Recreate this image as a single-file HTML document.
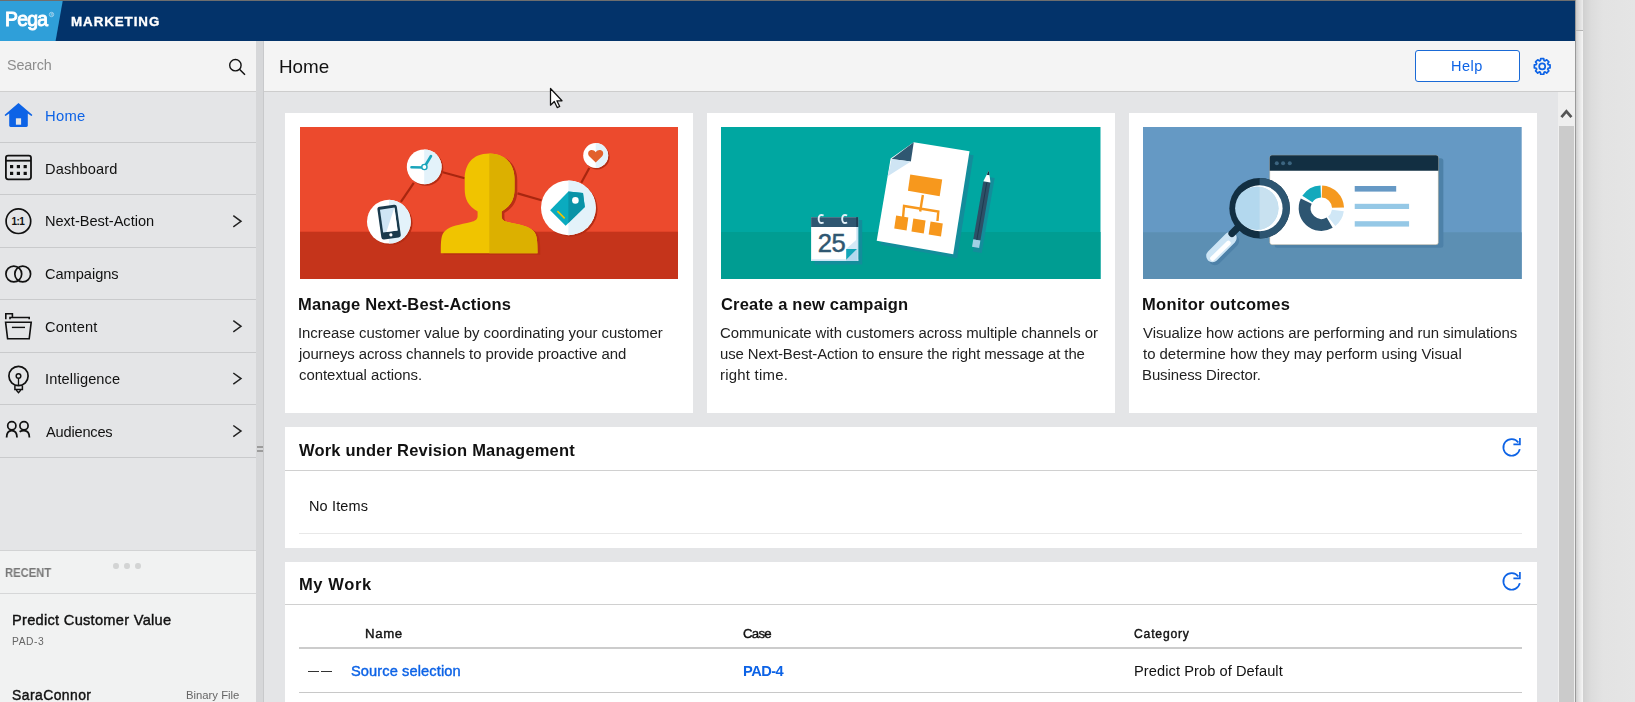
<!DOCTYPE html>
<html><head><meta charset="utf-8">
<style>
*{box-sizing:border-box;margin:0;padding:0}
html,body{width:1635px;height:702px;overflow:hidden;background:#e4e4e4;font-family:"Liberation Sans",sans-serif;color:#000}
.a{position:absolute}
.t{position:absolute;line-height:1;white-space:nowrap;will-change:transform}
#topline{left:0;top:0;width:1575px;height:1px;background:#6e6e6e}
#hdr{left:0;top:1px;width:1575px;height:40px;background:#03336a}
#logo{left:0;top:1px;width:64px;height:40px;background:#2f9fd9;clip-path:polygon(0 0,62.7px 0,55.6px 40px,0 40px)}
#side{left:0;top:41px;width:256px;height:661px;background:#e4e5e7}
#search{left:0;top:41px;width:256px;height:51px;background:#f3f3f3;border-bottom:1px solid #cfcfcf}
#split{left:256px;top:41px;width:8px;height:661px;background:#d6d7d9;border-right:1px solid #c8c9cb}
#mhdr{left:264px;top:41px;width:1311px;height:51px;background:#f4f4f4;border-bottom:1px solid #cdcdcd}
#content{left:264px;top:92px;width:1294px;height:610px;background:#e4e5e7}
#rstrip{left:1575px;top:0;width:8px;height:702px;border-left:1px solid #9a9a9a;background:linear-gradient(180deg,transparent 30px,#b5b5b5 30px,#b5b5b5 31px,transparent 31px),linear-gradient(90deg,#cfcfcf,#e2e2e2 40%,#f3f3f3 90%,#f6f6f6) 0 31px/100% 100% no-repeat,linear-gradient(90deg,#c9c9c9,#d9d9d9 40%,#eaeaea 90%,#ededed)}
#rbg{left:1583px;top:0;width:52px;height:702px;background:linear-gradient(90deg,#d0d0d0,#dcdcdc 8px,#e3e3e3 20px,#e5e5e5)}
.nav{position:absolute;left:0;width:256px;height:1px;background:#c9cacc}
.card{position:absolute;background:#fff;width:408px;height:300px;top:113px}
.card .img{position:absolute;left:15px;top:14px;overflow:hidden}
.panel{position:absolute;background:#fff;left:285px;width:1252px}
</style></head><body>
<div id="topline" class="a"></div>
<div id="hdr" class="a"></div>
<div id="logo" class="a"></div>
<svg class="a" style="left:48px;top:10px" width="8" height="8"><circle cx="3.5" cy="4.5" r="2.2" fill="none" stroke="#d8ecf8" stroke-width="0.6"/><text x="2.4" y="5.8" font-size="3.2" font-family="Liberation Sans" fill="#d8ecf8">R</text></svg>
<div id="side" class="a"></div>
<div id="search" class="a"></div>
<svg class="a" style="left:226px;top:56px" width="22" height="22" viewBox="0 0 22 22"><circle cx="9.4" cy="9.2" r="5.7" fill="none" stroke="#111" stroke-width="1.4"/><line x1="13.5" y1="13.3" x2="19" y2="18.8" stroke="#111" stroke-width="1.5"/></svg>
<div class="nav" style="top:142px"></div><div class="nav" style="top:194px"></div><div class="nav" style="top:247px"></div><div class="nav" style="top:299px"></div><div class="nav" style="top:352px"></div><div class="nav" style="top:404px"></div><div class="nav" style="top:457px"></div>
<svg class="a" style="left:0;top:92px" width="40" height="370" viewBox="0 92 40 370">
<path d="M18.5 103L4.8 114.8C4.6 115.2 5 116 5.6 116L9.2 113.6V125.6C9.2 126.4 9.8 127 10.6 127H26.4C27.2 127 27.8 126.4 27.8 125.6V113.6L31.4 116C32 116 32.4 115.2 32.2 114.8Z" fill="#0d63e6"/>
<rect x="15.9" y="118.3" width="5.2" height="6.4" fill="#e4e5e7"/>
<g fill="none" stroke="#111" stroke-width="1.8">
<rect x="5.9" y="155.6" width="25.1" height="23.7" rx="2.2"/><line x1="5.9" y1="160.7" x2="31" y2="160.7"/>
<circle cx="18.4" cy="221.2" r="12.3" stroke-width="1.7"/>
<circle cx="13.8" cy="274" r="7.9" stroke-width="1.7"/><circle cx="22.7" cy="274" r="7.9" stroke-width="1.7"/>
<path d="M5.8 319.3V313.8H12.4V316.7M10 319.3V317.5H29.2V319.3" stroke-width="1.6"/>
<path d="M5.6 322.2H31.2L29.2 338.8H7.6Z" stroke-width="1.6"/><line x1="11.9" y1="327.4" x2="25" y2="327.4" stroke-width="1.4"/>
<circle cx="18.5" cy="376" r="9.6" stroke-width="1.7"/><circle cx="18.5" cy="376" r="2.3" stroke-width="1.5"/><line x1="18.5" y1="378.3" x2="18.5" y2="385.6" stroke-width="1.3"/>
<path d="M14.9 385.8V389.6H22.4V385.8" stroke-width="1.5"/><path d="M16.2 390L18.5 392.6L20.8 390" stroke-width="1.4"/>
<circle cx="11.8" cy="425.7" r="4.1" stroke-width="1.7"/><circle cx="24" cy="425.7" r="4.1" stroke-width="1.7"/>
<path d="M6.6 437.6C6.6 433 8.8 430.6 11.8 430.6S17 433 17 437.6" stroke-width="1.8"/>
<path d="M19.6 431.8C20.8 430.9 22.3 430.6 24 430.6C27.1 430.6 29.4 433 29.4 437.6" stroke-width="1.8"/>
</g>
<g fill="#111"><rect x="10" y="165" width="3.2" height="3.2"/><rect x="16.8" y="165" width="3.2" height="3.2"/><rect x="23.6" y="165" width="3.2" height="3.2"/>
<rect x="10" y="171.8" width="3.2" height="3.2"/><rect x="16.8" y="171.8" width="3.2" height="3.2"/><rect x="23.6" y="171.8" width="3.2" height="3.2"/></g>
<text x="11.6" y="225.4" font-family="Liberation Sans" font-size="10" font-weight="bold" fill="#111" letter-spacing="-0.6">1:1</text>
</svg>
<svg class="a" style="left:228px;top:205px" width="20" height="240" viewBox="228 205 20 240">
<g fill="none" stroke="#222" stroke-width="1.5"><path d="M233.3 215.7L241 221.3L233.3 226.9"/><path d="M233.3 320.7L241 326.3L233.3 331.9"/><path d="M233.3 373L241 378.6L233.3 384.2"/><path d="M233.3 425.5L241 431.1L233.3 436.7"/></g>
</svg>
<div class="a" style="left:0;top:550px;width:256px;height:152px;background:#f1f2f2;border-top:1px solid #d2d3d4"></div>
<div class="a" style="left:0;top:593px;width:256px;height:1px;background:#d6d7d8"></div>
<div class="a" style="left:113px;top:562.5px;width:5.5px;height:6.5px;border-radius:50%;background:#d3d4d4"></div>
<div class="a" style="left:124px;top:562.5px;width:5.5px;height:6.5px;border-radius:50%;background:#d3d4d4"></div>
<div class="a" style="left:135px;top:562.5px;width:5.5px;height:6.5px;border-radius:50%;background:#d3d4d4"></div>
<div id="split" class="a"></div>
<div class="a" style="left:256.5px;top:445.8px;width:6px;height:2px;background:#9c9c9c"></div><div class="a" style="left:256.5px;top:449.6px;width:6px;height:2px;background:#9c9c9c"></div>
<div id="mhdr" class="a"></div>
<div class="a" style="left:1415px;top:50px;width:105px;height:32px;border:1px solid #1a6ad6;border-radius:3px;background:#fff"></div>
<svg class="a" style="left:1530px;top:54px" width="26" height="26" viewBox="1530 54 26 26"><path d="M1540.34 60.49L1540.67 58.55L1543.73 58.55L1544.06 60.49L1545.06 60.90L1546.67 59.77L1548.83 61.93L1547.70 63.54L1548.11 64.54L1550.05 64.87L1550.05 67.93L1548.11 68.26L1547.70 69.26L1548.83 70.87L1546.67 73.03L1545.06 71.90L1544.06 72.31L1543.73 74.25L1540.67 74.25L1540.34 72.31L1539.34 71.90L1537.73 73.03L1535.57 70.87L1536.70 69.26L1536.29 68.26L1534.35 67.93L1534.35 64.87L1536.29 64.54L1536.70 63.54L1535.57 61.93L1537.73 59.77L1539.34 60.90Z" fill="none" stroke="#0d63e6" stroke-width="1.7" stroke-linejoin="round"/><circle cx="1542.2" cy="66.4" r="3" fill="none" stroke="#0d63e6" stroke-width="1.7"/></svg>
<div id="content" class="a"></div>
<div class="card" style="left:285px"><svg class="img" style="left:15px;width:378px;height:152px" width="378" height="152" viewBox="0 0 378 152" preserveAspectRatio="none">
<rect width="378" height="152" fill="#ec4a2d"/><rect y="104.7" width="378" height="48" fill="#c5341b"/>
<g stroke="#a8260f" stroke-width="2.2"><line x1="100.9" y1="74.8" x2="113.8" y2="55.8"/><line x1="142.8" y1="45.3" x2="164.7" y2="51.3"/><line x1="217.5" y1="66.4" x2="241.5" y2="73.2"/><line x1="281.3" y1="55.8" x2="289.3" y2="40.9"/></g>
<defs><clipPath id="rh"><rect x="189.3" y="0" width="100" height="152"/></clipPath>
<path id="pers" d="M189.2 26.5C172 26.5 164.7 38 164.7 52V62C164.7 72 168 79 177.6 84.5V89C177.6 92.5 175 94 171 95C160 97.5 150 99 145 104C141 108 140.8 113 140.8 126.2H237.5C237.5 113 237 108 233.5 104C228.5 99 218 97.5 207.5 95C203.5 94 201.6 92.5 201.6 89V84.5C211 79 214.5 72 214.5 62V52C214.5 38 206 26.5 189.2 26.5Z"/>
<clipPath id="c1r"><rect x="124.2" y="0" width="40" height="152"/></clipPath>
<clipPath id="c2r"><rect x="88.9" y="0" width="40" height="152"/></clipPath>
<clipPath id="c3r"><rect x="268.4" y="0" width="40" height="152"/></clipPath>
<clipPath id="c4r"><rect x="295.7" y="0" width="40" height="152"/></clipPath>
</defs>
<use href="#pers" fill="#b82f15" transform="translate(2.8,1.5)"/>
<use href="#pers" fill="#f0c400"/>
<use href="#pers" fill="#dcb000" clip-path="url(#rh)"/>
<g fill="#b52d14"><circle cx="125.9" cy="41.4" r="17.4"/><circle cx="90.6" cy="96.2" r="21.9"/><circle cx="270.1" cy="82.3" r="27.4"/><circle cx="297.1" cy="29.9" r="12.5"/></g>
<g fill="#fff"><circle cx="124.2" cy="39.9" r="17.4"/><circle cx="88.9" cy="94.7" r="21.9"/><circle cx="268.4" cy="80.8" r="27.4"/><circle cx="295.7" cy="28.5" r="12.5"/></g>
<g fill="#e3f2fa"><circle cx="124.2" cy="39.9" r="17.4" clip-path="url(#c1r)"/><circle cx="88.9" cy="94.7" r="21.9" clip-path="url(#c2r)"/><circle cx="268.4" cy="80.8" r="27.4" clip-path="url(#c3r)"/><circle cx="295.7" cy="28.5" r="12.5" clip-path="url(#c4r)"/></g>
<g stroke="#1ba5bb" stroke-width="2.6" stroke-linecap="round" fill="none"><line x1="124" y1="40.5" x2="111.5" y2="40.2"/><line x1="125" y1="39" x2="131" y2="29"/></g>
<circle cx="124.4" cy="40" r="2.6" fill="#fff" stroke="#1ba5bb" stroke-width="1.4"/>
<g transform="rotate(-8 89 94.5)"><rect x="79.2" y="78.6" width="19.6" height="33" rx="2.5" fill="#1a3a4c"/><rect x="81.7" y="81.5" width="14.6" height="23" fill="#cfe5f4"/><path d="M96.3 81.5V104.5H85Z" fill="#fff"/><circle cx="89" cy="108" r="1.6" fill="#fff"/></g>
<path d="M250.1 83.2L268.4 64.5L283 65.9L284.8 80L265.6 98.7Z" fill="#0aabbf"/><path d="M268.4 64.5L283 65.9L284.8 80L268.4 96Z" fill="#0993a7"/><circle cx="275.4" cy="73.4" r="3.3" fill="#fff"/><line x1="257.4" y1="84.1" x2="264.7" y2="91.4" stroke="#f0c400" stroke-width="1.6"/>
<path d="M295.7 35.5L289.5 29.5C287.5 27.5 287.8 24.3 290.3 23.3C292.3 22.5 294.5 23.5 295.7 25.2C296.9 23.5 299.1 22.5 301.1 23.3C303.6 24.3 303.9 27.5 301.9 29.5Z" fill="#e2612c"/>
</svg></div>
<div class="card" style="left:707px"><svg class="img" style="left:14px;width:379.5px;height:152px" width="379.5" height="152" viewBox="0 0 379 152" preserveAspectRatio="none">
<rect width="379" height="152" fill="#00a7a1"/><rect y="105" width="379" height="47" fill="#009d92"/>
<path d="M196.5 19.3L252.2 28.3L235.9 131.2L159.5 117.8L173.4 35.5Z" fill="#138d9b"/>
<path d="M192.5 15.3L248.2 24.3L231.9 127.2L155.5 113.8L169.4 31.5Z" fill="#fff"/>
<path d="M192.5 15.3L170.3 32L189.6 34.5Z" fill="#2f5771"/>
<path d="M170.3 32L189.6 34.5L166.5 49.3Z" fill="#cfe5f4"/>
<g fill="#f7981d"><path d="M189 47.4L220.9 52.6L218.4 69.2L186.7 63.8Z"/>
<g transform="translate(1.7,0)"><path d="M173.2 88.5L185.4 90.4L183.6 103.5L171.3 101.6Z"/><path d="M190.4 91.5L202.6 93.4L200.8 106.5L188.5 104.6Z"/><path d="M207.6 94.5L219.8 96.4L218 109.5L205.7 107.6Z"/></g></g>
<g stroke="#f7981d" stroke-width="2.4" fill="none"><path d="M201.6 68L198.9 84.5"/><path d="M181.8 90.5L182.8 79L217 84.6L216.2 94"/></g>
<g transform="rotate(9.8 267.5 43.6)"><rect x="265.5" y="50" width="9" height="76" fill="#138d9b"/>
<path d="M263.9 55H271.1V114H263.9Z" fill="#2d5067"/><path d="M267.5 43.6L263.9 55H271.1Z" fill="#fff"/><path d="M267.5 43.6L266.1 48H268.9Z" fill="#1a3242"/>
<rect x="263.9" y="114" width="7.2" height="7.5" fill="#9fd0e5"/><line x1="267.5" y1="56" x2="267.5" y2="114" stroke="#1c3a4e" stroke-width="0.9"/></g>
<rect x="93.5" y="93" width="47.5" height="44.5" fill="#138d9b"/>
<rect x="90" y="90.2" width="47" height="43.8" fill="#fff"/>
<rect x="90" y="132.3" width="47" height="1.7" fill="#cfe5f4"/>
<rect x="90" y="90.2" width="47" height="9.8" fill="#2f5771"/>
<rect x="135" y="90.2" width="2" height="9.8" fill="#1f3f55"/>
<rect x="135.2" y="100" width="1.8" height="34" fill="#c5e2f2"/>
<path d="M125 122L136 112V122Z" fill="#d3e9f6"/>
<path d="M125 122H136L125 133Z" fill="#12a6b9"/>
<path d="M125 133L136 122V134H125Z" fill="#b3d9ee"/>
<g fill="none" stroke="#e3f1f9" stroke-width="1.9"><path d="M102.5 88.5C99 87 97.5 89 97.5 92S99 97 102.5 95.5"/><path d="M126 88.5C122.5 87 121 89 121 92S122.5 97 126 95.5"/></g>
<text x="96.6" y="125.2" font-family="Liberation Sans" font-size="25.5" fill="#2f5771" stroke="#2f5771" stroke-width="0.5" letter-spacing="-0.4">25</text>
</svg></div>
<div class="card" style="left:1129px"><svg class="img" style="left:14.3px;width:378.7px;height:152px" width="378.7" height="152" viewBox="0 0 379 152" preserveAspectRatio="none">
<rect width="379" height="152" fill="#6599c4"/><rect y="105.3" width="379" height="47" fill="#5c8fb3"/>
<rect x="131.8" y="31.3" width="168.8" height="89.4" rx="2.5" fill="#4d81a8"/>
<rect x="126.8" y="28.3" width="168.8" height="89.4" rx="2.5" fill="#fff" stroke="#a89a7a" stroke-width="0.4"/>
<path d="M126.8 43.8V30.8A2.5 2.5 0 0 1 129.3 28.3H293.1A2.5 2.5 0 0 1 295.6 30.8V43.8Z" fill="#122f42"/>
<g fill="#3c6580"><circle cx="133.9" cy="36.2" r="2"/><circle cx="140.2" cy="36.2" r="2"/><circle cx="146.9" cy="36.2" r="2"/></g>
<path d="M179.29 58.51A22.7 22.7 0 0 1 201.19 80.41L189.19 80.83A10.7 10.7 0 0 0 178.87 70.51Z" fill="#f5991f"/>
<path d="M200.98 84.36A22.7 22.7 0 0 1 192.48 99.09L185.09 89.63A10.7 10.7 0 0 0 189.10 82.69Z" fill="#d0e7f6"/>
<path d="M189.85 100.86A22.7 22.7 0 0 1 157.93 71.61L168.80 76.68A10.7 10.7 0 0 0 183.85 90.47Z" fill="#2d5571"/>
<path d="M159.46 68.84A22.7 22.7 0 0 1 177.71 58.51L178.13 70.51A10.7 10.7 0 0 0 169.53 75.37Z" fill="#13a9bc"/>
<rect x="211.9" y="59" width="41.5" height="5.6" fill="#6699c5"/>
<rect x="211.9" y="76.8" width="54.4" height="5.2" fill="#95c8e6"/>
<rect x="211.9" y="94.2" width="54.4" height="5.4" fill="#95c8e6"/>
<path d="M90 114L72 132" stroke="#4d81a8" stroke-width="12.5" stroke-linecap="round"/>
<path d="M87.5 111L69.5 129" stroke="#cde5f5" stroke-width="12.5" stroke-linecap="round"/>
<path d="M85.5 116L69.5 131.5" stroke="#fff" stroke-width="4.6" stroke-linecap="round"/>
<path d="M89 106.5L95 100.5" stroke="#122f42" stroke-width="7" stroke-linecap="round"/>
<circle cx="116.7" cy="81.2" r="30.3" fill="#122f42"/>
<path d="M116.7 50.9A30.3 30.3 0 0 1 116.7 111.5Z" fill="#2d5571"/>
<circle cx="116.7" cy="81.2" r="23" fill="#fff"/>
<circle cx="113.9" cy="81.2" r="21.7" fill="#b3d8ee"/>
<path d="M116.7 59.7A21.7 21.7 0 0 1 116.7 102.7Z" fill="#c8e1f0"/>
</svg></div>
<div class="panel" style="top:427px;height:121px"></div>
<div class="panel" style="top:562px;height:140px"></div>
<div class="a" style="left:285px;top:470px;width:1252px;height:1px;background:#d0d0d0"></div>
<svg class="a" style="left:1500px;top:435px" width="24" height="24" viewBox="1500 435 24 24"><path d="M1519.77 449.13A8.3 8.3 0 1 1 1518.36 442.52" fill="none" stroke="#0d63e6" stroke-width="1.7"/><path d="M1519.9 438.10V444.30H1513.4" fill="none" stroke="#0d63e6" stroke-width="1.7"/></svg>
<div class="a" style="left:299px;top:533px;width:1223px;height:1px;background:#e8e8e8"></div>
<div class="a" style="left:285px;top:604px;width:1252px;height:1px;background:#d0d0d0"></div>
<svg class="a" style="left:1500px;top:569px" width="24" height="24" viewBox="1500 569 24 24"><path d="M1519.77 583.13A8.3 8.3 0 1 1 1518.36 576.52" fill="none" stroke="#0d63e6" stroke-width="1.7"/><path d="M1519.9 572.10V578.30H1513.4" fill="none" stroke="#0d63e6" stroke-width="1.7"/></svg>
<div class="a" style="left:299px;top:647px;width:1223px;height:2px;background:#cccccc"></div>
<div class="a" style="left:308.3px;top:671px;width:10.8px;height:1px;background:#333"></div>
<div class="a" style="left:320.8px;top:671px;width:10.9px;height:1px;background:#333"></div>
<div class="a" style="left:299px;top:692px;width:1223px;height:1px;background:#c8c8c8"></div>
<div class="a" style="left:1558px;top:92px;width:17px;height:610px;background:#efefef"></div>
<div class="a" style="left:1559px;top:126px;width:15px;height:576px;background:#cbcbcb"></div>
<svg class="a" style="left:1558px;top:104px" width="17" height="18"><path d="M3.4 13.2L8.4 7.4L13.4 13.2" fill="none" stroke="#555" stroke-width="2.7" stroke-linejoin="miter"/></svg>
<div id="rstrip" class="a"></div>
<div id="rbg" class="a"></div>
<div class="t" style="left:5.0px;top:10px;font-size:19.4px;letter-spacing:-0.767px;font-weight:normal;-webkit-text-stroke:0.9px currentColor;color:#fff">Pega</div>
<div class="t" style="left:70.7px;top:15px;font-size:13.33px;letter-spacing:0.95px;font-weight:bold;-webkit-text-stroke:0.35px currentColor;color:#fff">MARKETING</div>
<div class="t" style="left:7.4px;top:58px;font-size:14.35px;letter-spacing:-0.14px;font-weight:normal;color:#8d8d8d">Search</div>
<div class="t" style="left:278.5px;top:58px;font-size:18.84px;letter-spacing:0.0px;font-weight:normal;color:#111">Home</div>
<div class="t" style="left:1451.4px;top:59px;font-size:14.49px;letter-spacing:0.533px;font-weight:normal;color:#0d63e6">Help</div>
<div class="t" style="left:45.1px;top:109px;font-size:14.78px;letter-spacing:0.3px;font-weight:normal;color:#0d63e6">Home</div>
<div class="t" style="left:45.4px;top:162px;font-size:14.6px;letter-spacing:0.113px;font-weight:normal;color:#111">Dashboard</div>
<div class="t" style="left:45.4px;top:214px;font-size:14.6px;letter-spacing:-0.027px;font-weight:normal;color:#111">Next-Best-Action</div>
<div class="t" style="left:45.0px;top:267px;font-size:14.6px;letter-spacing:-0.025px;font-weight:normal;color:#111">Campaigns</div>
<div class="t" style="left:45.0px;top:320px;font-size:14.6px;letter-spacing:0.2px;font-weight:normal;color:#111">Content</div>
<div class="t" style="left:45.0px;top:372px;font-size:14.6px;letter-spacing:0.118px;font-weight:normal;color:#111">Intelligence</div>
<div class="t" style="left:45.7px;top:425px;font-size:14.6px;letter-spacing:-0.188px;font-weight:normal;color:#111">Audiences</div>
<div class="t" style="left:4.5px;top:567px;font-size:12.1px;letter-spacing:0px;transform:scaleX(0.93);transform-origin:0 0;font-weight:bold;color:#777">RECENT</div>
<div class="t" style="left:11.7px;top:613px;font-size:14.64px;letter-spacing:0.276px;font-weight:normal;-webkit-text-stroke:0.4px currentColor;color:#111">Predict Customer Value</div>
<div class="t" style="left:11.7px;top:637px;font-size:10.29px;letter-spacing:0.575px;font-weight:normal;color:#666">PAD-3</div>
<div class="t" style="left:12.4px;top:689px;font-size:13.91px;letter-spacing:0.444px;font-weight:normal;-webkit-text-stroke:0.4px currentColor;color:#111">SaraConnor</div>
<div class="t" style="left:186.3px;top:690px;font-size:11.3px;letter-spacing:0.0px;font-weight:normal;color:#666">Binary File</div>
<div class="t" style="left:298.3px;top:296px;font-size:16.5px;letter-spacing:0.17px;font-weight:bold;color:#111">Manage Next-Best-Actions</div>
<div class="t" style="left:298.3px;top:326px;font-size:14.93px;letter-spacing:-0.037px;font-weight:normal;color:#222">Increase customer value by coordinating your customer</div>
<div class="t" style="left:299.3px;top:347px;font-size:14.93px;letter-spacing:-0.096px;font-weight:normal;color:#222">journeys across channels to provide proactive and</div>
<div class="t" style="left:299.3px;top:368px;font-size:14.93px;letter-spacing:-0.022px;font-weight:normal;color:#222">contextual actions.</div>
<div class="t" style="left:721.3px;top:296px;font-size:16.5px;letter-spacing:0.185px;font-weight:bold;color:#111">Create a new campaign</div>
<div class="t" style="left:720.3px;top:326px;font-size:14.93px;letter-spacing:-0.053px;font-weight:normal;color:#222">Communicate with customers across multiple channels or</div>
<div class="t" style="left:720.3px;top:347px;font-size:14.93px;letter-spacing:-0.109px;font-weight:normal;color:#222">use Next-Best-Action to ensure the right message at the</div>
<div class="t" style="left:720.3px;top:368px;font-size:14.93px;letter-spacing:0.23px;font-weight:normal;color:#222">right time.</div>
<div class="t" style="left:1142.3px;top:296px;font-size:16.5px;letter-spacing:0.333px;font-weight:bold;color:#111">Monitor outcomes</div>
<div class="t" style="left:1143.3px;top:326px;font-size:14.93px;letter-spacing:-0.053px;font-weight:normal;color:#222">Visualize how actions are performing and run simulations</div>
<div class="t" style="left:1143.3px;top:347px;font-size:14.93px;letter-spacing:-0.007px;font-weight:normal;color:#222">to determine how they may perform using Visual</div>
<div class="t" style="left:1142.3px;top:368px;font-size:14.93px;letter-spacing:-0.076px;font-weight:normal;color:#222">Business Director.</div>
<div class="t" style="left:299.2px;top:442px;font-size:16.5px;letter-spacing:0.193px;font-weight:bold;color:#111">Work under Revision Management</div>
<div class="t" style="left:308.5px;top:499px;font-size:14.49px;letter-spacing:0.143px;font-weight:normal;color:#111">No Items</div>
<div class="t" style="left:298.5px;top:576px;font-size:16.5px;letter-spacing:0.617px;font-weight:bold;color:#111">My Work</div>
<div class="t" style="left:364.9px;top:627px;font-size:13.26px;letter-spacing:0.633px;font-weight:normal;-webkit-text-stroke:0.4px currentColor;color:#111">Name</div>
<div class="t" style="left:743.1px;top:627px;font-size:13.26px;letter-spacing:-0.733px;font-weight:normal;-webkit-text-stroke:0.4px currentColor;color:#111">Case</div>
<div class="t" style="left:1134.3px;top:628px;font-size:12.17px;letter-spacing:0.8px;font-weight:normal;-webkit-text-stroke:0.4px currentColor;color:#111">Category</div>
<div class="t" style="left:350.9px;top:664px;font-size:14.64px;letter-spacing:0.1px;font-weight:normal;-webkit-text-stroke:0.4px currentColor;color:#0d63e6">Source selection</div>
<div class="t" style="left:743.0px;top:664px;font-size:14.64px;letter-spacing:-0.537px;font-weight:bold;color:#0d63e6">PAD-4</div>
<div class="t" style="left:1133.8px;top:664px;font-size:14.64px;letter-spacing:0.073px;font-weight:normal;color:#111">Predict Prob of Default</div>
<svg class="a" style="left:548.8px;top:87.4px" width="16" height="24" viewBox="0 0 16 24"><path d="M1.5 1.5V18.2L5.3 14.5L8.2 20.6L10.7 19.5L7.9 13.8H13Z" fill="#fff" stroke="#111" stroke-width="1.25" stroke-linejoin="round"/></svg>
</body></html>
